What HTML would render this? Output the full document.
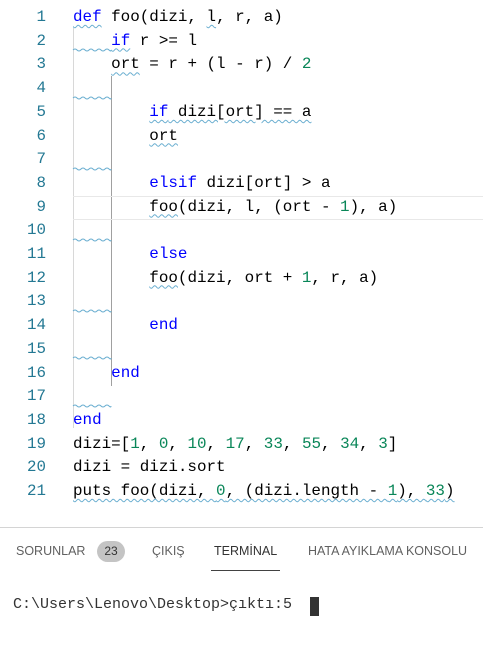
<!DOCTYPE html>
<html><head><meta charset="utf-8"><style>
body{margin:0;width:483px;height:647px;background:#fff;overflow:hidden;position:relative;font-family:"Liberation Mono",monospace;}
.ln{position:absolute;left:0;width:46px;text-align:right;color:#237893;font-size:15.8px;line-height:23.7px;}
.cd{position:absolute;left:73px;font-size:15.9px;line-height:23.7px;color:#000;white-space:pre;}
.k{color:#0000ff}.n{color:#098658}
.w{text-decoration:underline wavy #6aaed0;text-decoration-thickness:1px;text-underline-offset:3px}
.tab{position:absolute;top:544px;font-family:"Liberation Sans",sans-serif;font-size:12.5px;color:#616161;}
</style></head><body>
<div style="position:absolute;left:73px;top:28px;width:1px;height:400px;background:#d8d8d8"></div>
<div style="position:absolute;left:111px;top:76px;width:1px;height:310px;background:#a0a0a0"></div>
<div style="position:absolute;left:73px;top:196px;width:410px;height:22px;border-top:1px solid #e8e8e8;border-bottom:1px solid #e8e8e8"></div>
<svg style="position:absolute;left:0;top:0" width="483" height="520">
<g fill="none" stroke="#6aaed0" stroke-width="1">
<path d="M73 50 q2 -2 4 0 t4 0 t4 0 t4 0 t4 0 t4 0 t4 0 t4 0 t4 0 t2 0"/>
<path d="M73 98 q2 -2 4 0 t4 0 t4 0 t4 0 t4 0 t4 0 t4 0 t4 0 t4 0 t2 0"/>
<path d="M73 169 q2 -2 4 0 t4 0 t4 0 t4 0 t4 0 t4 0 t4 0 t4 0 t4 0 t2 0"/>
<path d="M73 240 q2 -2 4 0 t4 0 t4 0 t4 0 t4 0 t4 0 t4 0 t4 0 t4 0 t2 0"/>
<path d="M73 311 q2 -2 4 0 t4 0 t4 0 t4 0 t4 0 t4 0 t4 0 t4 0 t4 0 t2 0"/>
<path d="M73 358 q2 -2 4 0 t4 0 t4 0 t4 0 t4 0 t4 0 t4 0 t4 0 t4 0 t2 0"/>
<path d="M73 406 q2 -2 4 0 t4 0 t4 0 t4 0 t4 0 t4 0 t4 0 t4 0 t4 0 t2 0"/>
</g></svg>
<div class="ln" style="top:6px">1</div><div class="cd" style="top:6px"><span class="k w">def</span> foo(dizi, <span class="w">l</span>, r, a)</div>
<div class="ln" style="top:29.7px">2</div><div class="cd" style="top:29.7px">    <span class="k w">if</span> r &gt;= l</div>
<div class="ln" style="top:53.4px">3</div><div class="cd" style="top:53.4px">    <span class="w">ort</span> = r + (l - r) / <span class="n">2</span></div>
<div class="ln" style="top:77.1px">4</div>
<div class="ln" style="top:100.8px">5</div><div class="cd" style="top:100.8px">        <span class="w"><span class="k">if</span> dizi[ort] == a</span></div>
<div class="ln" style="top:124.5px">6</div><div class="cd" style="top:124.5px">        <span class="w">ort</span></div>
<div class="ln" style="top:148.2px">7</div>
<div class="ln" style="top:171.9px">8</div><div class="cd" style="top:171.9px">        <span class="k">elsif</span> dizi[ort] &gt; a</div>
<div class="ln" style="top:195.6px">9</div><div class="cd" style="top:195.6px">        <span class="w">foo</span>(dizi, l, (ort - <span class="n">1</span>), a)</div>
<div class="ln" style="top:219.3px">10</div>
<div class="ln" style="top:243px">11</div><div class="cd" style="top:243px">        <span class="k">else</span></div>
<div class="ln" style="top:266.7px">12</div><div class="cd" style="top:266.7px">        <span class="w">foo</span>(dizi, ort + <span class="n">1</span>, r, a)</div>
<div class="ln" style="top:290.4px">13</div>
<div class="ln" style="top:314.1px">14</div><div class="cd" style="top:314.1px">        <span class="k">end</span></div>
<div class="ln" style="top:337.8px">15</div>
<div class="ln" style="top:361.5px">16</div><div class="cd" style="top:361.5px">    <span class="k">end</span></div>
<div class="ln" style="top:385.2px">17</div>
<div class="ln" style="top:408.9px">18</div><div class="cd" style="top:408.9px"><span class="k">end</span></div>
<div class="ln" style="top:432.6px">19</div><div class="cd" style="top:432.6px">dizi=[<span class="n">1</span>, <span class="n">0</span>, <span class="n">10</span>, <span class="n">17</span>, <span class="n">33</span>, <span class="n">55</span>, <span class="n">34</span>, <span class="n">3</span>]</div>
<div class="ln" style="top:456.3px">20</div><div class="cd" style="top:456.3px">dizi = dizi.sort</div>
<div class="ln" style="top:480px">21</div><div class="cd" style="top:480px"><span class="w">puts foo(dizi, <span class="n">0</span>, (dizi.length - <span class="n">1</span>), <span class="n">33</span>)</span></div>
<div style="position:absolute;left:0;top:527px;width:483px;height:1px;background:#d4d4d4"></div>
<div class="tab" style="left:16px">SORUNLAR</div>
<div style="position:absolute;left:97px;top:541px;width:28px;height:21px;border-radius:11px;background:#c4c4c4;font-family:'Liberation Sans',sans-serif;font-size:12px;color:#333;text-align:center;line-height:21px">23</div>
<div class="tab" style="left:152px">ÇIKIŞ</div>
<div class="tab" style="left:214px;color:#333">TERMİNAL</div>
<div style="position:absolute;left:211px;top:570px;width:69px;height:1px;background:#424242"></div>
<div class="tab" style="left:308px">HATA AYIKLAMA KONSOLU</div>
<div style="position:absolute;left:13px;top:596px;font-family:'Liberation Mono',monospace;font-size:15px;color:#333;white-space:pre">C:\Users\Lenovo\Desktop&gt;çıktı:5</div>
<div style="position:absolute;left:310px;top:597px;width:9px;height:19px;background:#333"></div>
</body></html>
